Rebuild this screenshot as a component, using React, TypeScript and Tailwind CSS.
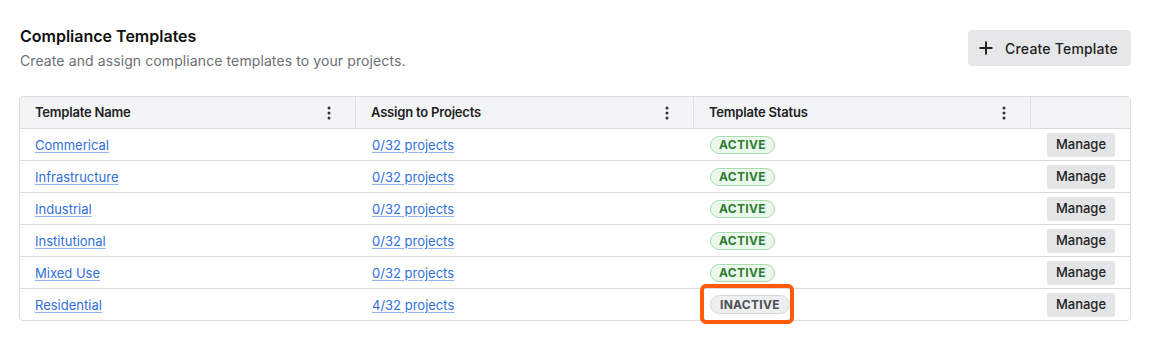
import React from "react";

const rows = [
  { name: "Commerical", proj: "0/32 projects", active: true },
  { name: "Infrastructure", proj: "0/32 projects", active: true },
  { name: "Industrial", proj: "0/32 projects", active: true },
  { name: "Institutional", proj: "0/32 projects", active: true },
  { name: "Mixed Use", proj: "0/32 projects", active: true },
  { name: "Residential", proj: "4/32 projects", active: false },
];

function Kebab() {
  return (
    <svg width="4" height="14" viewBox="0 0 4 14" className="text-[#333]">
      <circle cx="2" cy="2" r="1.5" fill="currentColor" />
      <circle cx="2" cy="7" r="1.5" fill="currentColor" />
      <circle cx="2" cy="12" r="1.5" fill="currentColor" />
    </svg>
  );
}

function HeaderCell({ label, kebab = true, last = false }: { label: string; kebab?: boolean; last?: boolean }) {
  return (
    <div className={`flex items-center justify-between h-[31px] pl-[15px] pr-6 ${last ? "" : "border-r border-[#e0e0e0]"}`}>
      <span className="text-[13px] font-semibold text-[#222] tracking-[-0.2px]">{label}</span>
      {kebab && <Kebab />}
    </div>
  );
}

export default function App() {
  return (
    <div className="w-[1150px] h-[344px] bg-white relative" style={{ fontFamily: "Inter, 'Noto Sans', sans-serif" }}>
      <div className="px-5 pt-[25px]">
        <div className="flex justify-between items-start">
          <div>
            <h1 className="text-[16px] leading-[22px] font-semibold text-[#111]">Compliance Templates</h1>
            <p className="mt-[4px] text-[14px] leading-[20px] text-[#6b7075] tracking-[0.1px]">
              Create and assign compliance templates to your projects.
            </p>
          </div>
          <button className="mt-[5px] mr-[-1px] h-[36px] pl-[10px] pr-[13px] flex items-center gap-[11px] rounded-[4px] bg-[#e5e7e8] text-[#222] text-[14px] font-medium tracking-[0.2px]">
            <svg width="16" height="16" viewBox="0 0 16 16">
              <path d="M8 1.5v13M1.5 8h13" stroke="#222" strokeWidth="2" />
            </svg>
            Create Template
          </button>
        </div>

        <div className="mt-[25px] ml-[-1px] mr-[-1px] border border-[#dcdcdc] rounded-[4px] overflow-hidden">
          <div className="grid grid-cols-[336px_338px_337px_1fr] bg-[#f3f4f6] border-b border-[#dcdcdc]">
            <HeaderCell label="Template Name" />
            <HeaderCell label="Assign to Projects" />
            <HeaderCell label="Template Status" />
            <HeaderCell label="" kebab={false} last />
          </div>
          {rows.map((r, i) => (
            <div
              key={r.name}
              className={`grid grid-cols-[336px_338px_337px_1fr] items-center ${i < rows.length - 1 ? "h-[32px] border-b border-[#dcdcdc]" : "h-[31px]"}`}
            >
              <div className="pl-[15px] leading-[16px]">
                <a className="text-[13px] text-[#2f6fd8] underline underline-offset-2 decoration-[#8fb3ee] cursor-pointer">{r.name}</a>
              </div>
              <div className="pl-4 leading-[16px]">
                <a className="text-[13px] text-[#2f6fd8] underline underline-offset-2 decoration-[#8fb3ee] cursor-pointer">{r.proj}</a>
              </div>
              <div className="pl-4 flex">
                {r.active ? (
                  <span className="h-[18px] px-[8px] flex items-center rounded-full border border-[#a9dcae] bg-[#eaf7ec] text-[#2e7d32] text-[12px] font-bold tracking-[0.3px]">
                    ACTIVE
                  </span>
                ) : (
                  <span className="h-[19px] px-[9px] flex items-center rounded-full border border-[#d6d8da] bg-[#eceef0] text-[#4b4f54] text-[12px] font-bold tracking-[0.3px]">
                    INACTIVE
                  </span>
                )}
              </div>
              <div className="flex justify-end pr-[15px]">
                <button className="h-[24px] w-[68px] rounded-[3px] bg-[#e3e5e7] text-[13px] font-medium text-[#222]">Manage</button>
              </div>
            </div>
          ))}
        </div>
      </div>
      <div className="absolute left-[700px] top-[284px] w-[94px] h-[40px] border-[4px] border-[#ff5a0a] rounded-[6px] pointer-events-none" />
    </div>
  );
}
